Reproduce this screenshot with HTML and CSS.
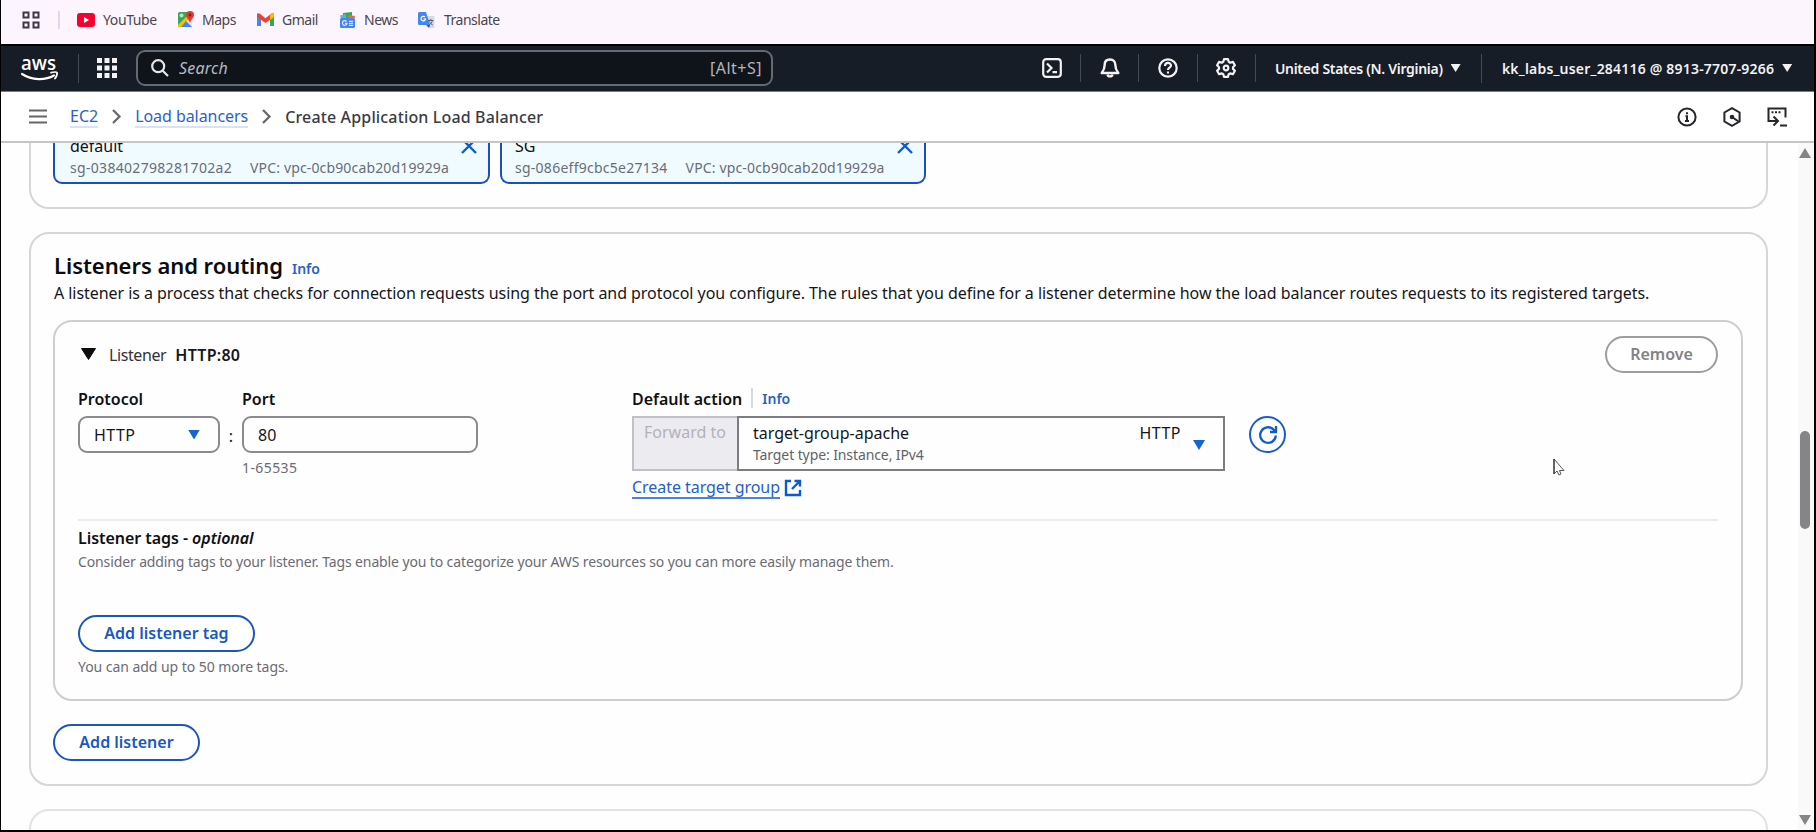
FILE: index.html
```html
<!DOCTYPE html>
<html lang="en">
<head>
<meta charset="utf-8">
<title>Create Application Load Balancer</title>
<link rel="stylesheet" href="styles.css">
</head>
<body>
<div class="frame">
  <nav class="bookmarks">
    <svg class="bm-apps" width="18" height="18" viewBox="0 0 18 18" fill="none" stroke="#3c3a42" stroke-width="2"><path d="M1.500 1.500h5v5h-5zM11.500 1.500h5v5h-5zM1.500 11.500h5v5h-5zM11.500 11.500h5v5h-5z"/></svg>
    <span class="bm-sep"></span>
    <span class="bm bm-youtube"><svg width="18" height="14" viewBox="0 0 18 14"><rect width="18" height="14" rx="3" fill="#f6022f"/><path d="M7 4v6l5-3z" fill="#fff"/></svg><span>YouTube</span></span>
    <span class="bm bm-maps"><svg width="18" height="17" viewBox="0 0 18 17"><rect x="1" y="1" width="14" height="15" rx="1.500" fill="#34a853"/><path d="M1 16 15 2v14z" fill="#dfe3ea"/><path d="M1 14 12 3l3 2L4 16H1z" fill="#fbbc04"/><path d="M4 16l5-6 6 6z" fill="#4285f4"/><circle cx="4.500" cy="4.500" r="2" fill="#b7e2c1"/><path d="M13 0a4 4 0 0 1 4 4c0 3-3 4-4 8-1-4-4-5-4-8a4 4 0 0 1 4-4z" fill="#e0392e"/><circle cx="13" cy="4" r="1.400" fill="#8c1d16"/></svg><span>Maps</span></span>
    <span class="bm bm-gmail"><svg width="17" height="13" viewBox="0 0 17 13"><path d="M0 2v11h4V5z" fill="#4285f4"/><path d="M17 2v11h-4V5z" fill="#34a853"/><path d="M0 1.500C0 0 2 0 3 .8l5.500 4.400L14 .8c1-.8 3-.8 3 .7V4L8.500 10 0 4z" fill="#ea4335"/><path d="M13 1.600 14 .8c1-.8 3-.8 3 .7V4l-4 3z" fill="#fbbc04"/></svg><span>Gmail</span></span>
    <span class="bm bm-news"><svg width="17" height="16" viewBox="0 0 17 16"><path d="M4 1l9-1v6H4z" fill="#34a853"/><path d="M1 3.500 7 2v5H2z" fill="#55b7d0"/><path d="M9 3l7 1-1 4H9z" fill="#ea6a35"/><rect x="1" y="6" width="15" height="10" rx="1.500" fill="#4285f4"/><path d="M7.500 9.500A2.300 2.300 0 1 0 8 11.300H6M10 9.300h4M10 11.300h4M10 13.300h4" fill="none" stroke="#dbe8fd" stroke-width="1.200"/></svg><span>News</span></span>
    <span class="bm bm-translate"><svg width="17" height="16" viewBox="0 0 17 16"><path d="M7 4h8.500a1 1 0 0 1 1 1v10a1 1 0 0 1-1 1H11z" fill="#d5dae3"/><path d="M1.500 0H8l4 13H1.500A1.500 1.500 0 0 1 0 11.500v-10A1.500 1.500 0 0 1 1.500 0z" fill="#4285f4"/><path d="M7 5A2.300 2.300 0 1 0 7.600 7H5.500" fill="none" stroke="#fff" stroke-width="1.200"/><path d="M10 8.500h5.500M12.800 7v1.500M11 13c2-1 3-2.500 3.300-4.500M11.500 9.500c.6 1.500 1.600 2.800 3.300 3.500" fill="none" stroke="#5b6270"/><path d="M8 13h4l-1 3z" fill="#2a56c6"/></svg><span>Translate</span></span>
  </nav>

  <header class="topnav">
    <svg class="aws" width="38" height="28" viewBox="0 -2 38 28"><text x="0" y="13.500" class="aws-word" textLength="35" lengthAdjust="spacingAndGlyphs">aws</text><path d="M1 18c10 6.500 23 6.500 32 1.500" fill="none" stroke="#fff" stroke-width="2.200" stroke-linecap="round"/><path d="M30 16.700c3-.8 5.500-.8 6 0s-.4 3.800-2 5.800" fill="none" stroke="#fff" stroke-width="1.800" stroke-linecap="round"/></svg>
    <span class="nav-sep sep-logo"></span>
    <svg class="grid" width="20" height="20" viewBox="0 0 20 20" fill="#f4f4f6"><path d="M0 0h5v5H0zM7.500 0h5v5h-5zM15 0h5v5h-5zM0 7.500h5v5H0zM7.500 7.500h5v5h-5zM15 7.500h5v5h-5zM0 15h5v5H0zM7.500 15h5v5h-5zM15 15h5v5h-5z"/></svg>
    <div class="search">
      <svg width="18" height="18" viewBox="0 0 18 18" fill="none" stroke="#e6e6ea" stroke-width="2.200"><circle cx="7.200" cy="7.200" r="6"/><path d="m11.500 11.500 5.500 5.500"/></svg>
      <span class="search-ph">Search</span><span class="search-key">[Alt+S]</span>
    </div>
    <div class="nav-icons">
      <span class="nav-ic"><svg width="20" height="20" viewBox="0 0 20 20" fill="none" stroke="#f2f2f5" stroke-width="2.200"><rect x="1.200" y="1.200" width="17.600" height="17.600" rx="3"/><path d="m5 5.500 4.500 4.500L5 14.500M10.500 14.200H15"/></svg></span>
      <span class="nav-ic"><svg width="20" height="20" viewBox="0 0 20 20" fill="none" stroke="#f2f2f5" stroke-width="2.400" stroke-linejoin="round"><path d="M10 1.500c-3.500 0-5.300 2.300-5.300 5.200 0 4-1 5.800-3 8.300h16.600c-2-2.500-3-4.300-3-8.300 0-2.900-1.800-5.200-5.300-5.200z"/><path d="M7.500 16.500c.5 2.500 4.500 2.500 5 0"/></svg></span>
      <span class="nav-ic"><svg width="20" height="20" viewBox="0 0 20 20" fill="none" stroke="#f2f2f5" stroke-width="2.200"><circle cx="10" cy="10" r="8.700"/><path d="M7 8c0-4 6-4 6-.5 0 2.300-3 2-3 4.500M10 13.500v2"/></svg></span>
      <span class="nav-ic"><svg width="20" height="20" viewBox="0 0 20 20" fill="none" stroke="#f2f2f5" stroke-width="2.200" stroke-linejoin="round"><path d="M8 1.200h4l.7 2.600 1.500.9 2.700-.8 2 3.400L17 9.200v1.700l1.900 1.900-2 3.400-2.700-.8-1.500.9-.7 2.600H8l-.7-2.600-1.500-.9-2.700.8-2-3.400L3 10.900V9.200L1.100 7.300l2-3.400 2.700.8 1.500-.9z"/><circle cx="10" cy="10" r="2.300"/></svg></span>
    </div>
    <div class="region"><span class="region-t">United States (N. Virginia)</span><i class="caret"></i></div>
    <span class="nav-sep sep-user"></span>
    <div class="user"><span class="user-t">kk_labs_user_284116 @ 8913-7707-9266</span><i class="caret"></i></div>
  </header>

  <div class="crumbs">
    <svg class="burger" width="18" height="15" viewBox="0 0 18 15" stroke="#66666b" stroke-width="2.200"><path d="M0 1.500h18M0 7.500h18M0 13.500h18"/></svg>
    <a class="cr cr-ec2">EC2</a>
    <svg class="chev" width="9" height="15" viewBox="0 0 9 15" fill="none" stroke="#66666b" stroke-width="2.200"><path d="m1 1 6.500 6.500L1 14"/></svg>
    <a class="cr cr-lb">Load balancers</a>
    <svg class="chev" width="9" height="15" viewBox="0 0 9 15" fill="none" stroke="#66666b" stroke-width="2.200"><path d="m1 1 6.500 6.500L1 14"/></svg>
    <span class="cr-cur">Create Application Load Balancer</span>
    <div class="tools">
      <svg width="20" height="20" viewBox="0 0 20 20" fill="none" stroke="#26262b" stroke-width="2"><circle cx="10" cy="10" r="8.600"/><path d="M8.500 9.200H10V14M8 14h4M10 5.300v2"/></svg>
      <svg width="20" height="20" viewBox="0 0 20 20" fill="none" stroke="#26262b" stroke-width="2"><path d="m10 1.200 7.600 4.300v9L10 18.800l-7.600-4.300v-9z"/><path d="M10 10l6.500 4.500"/><circle cx="10" cy="10" r="1.300" fill="#26262b"/></svg>
      <svg width="20" height="20" viewBox="0 0 20 20" fill="none" stroke="#26262b" stroke-width="2"><path d="M5.500 14H1.500V1.500h17v9M13 18.500h7M4 14h6.500M6.500 9.500l4.500 4.500-4.500 4.500M4.500 5.300h2M8 5.300h2M11.500 5.300h2"/></svg>
    </div>
  </div>

  <main class="body">
    <div class="content">
      <section class="card card-top">
        <div class="token token-a">
          <div class="tk-name">default</div>
          <svg class="tk-x" width="16" height="16" viewBox="0 0 16 16" stroke="#0f5bd0" stroke-width="2.400"><path d="m1 1 14 14M15 1 1 15"/></svg>
          <div class="tk-meta"><span class="tk-id">sg-038402798281702a2</span><span class="tk-vpc">VPC: vpc-0cb90cab20d19929a</span></div>
        </div>
        <div class="token token-b">
          <div class="tk-name">SG</div>
          <svg class="tk-x" width="16" height="16" viewBox="0 0 16 16" stroke="#0f5bd0" stroke-width="2.400"><path d="m1 1 14 14M15 1 1 15"/></svg>
          <div class="tk-meta"><span class="tk-id tk-id-b">sg-086eff9cbc5e27134</span><span class="tk-vpc">VPC: vpc-0cb90cab20d19929a</span></div>
        </div>
      </section>

      <section class="card card-main">
        <div class="title-row"><h2>Listeners and routing</h2><a class="info">Info</a></div>
        <p class="intro">A listener is a process that checks for connection requests using the port and protocol you configure. The rules that you define for a listener determine how the load balancer routes requests to its registered targets.</p>
        <div class="listener">
          <div class="l-head">
            <svg width="15" height="12" viewBox="0 0 15 12"><path d="M.5.500h14l-7 11z" fill="#0c0c0e" stroke="#0c0c0e" stroke-linejoin="round"/></svg>
            <span class="l-word">Listener</span><b class="l-port">HTTP:80</b>
            <button class="btn btn-remove"><span>Remove</span></button>
          </div>
          <div class="fields">
            <div class="f-protocol"><label class="lbl lbl-protocol">Protocol</label><div class="box select"><span class="http">HTTP</span><i class="tri"></i></div></div>
            <span class="colon">:</span>
            <div class="f-port"><label class="lbl lbl-port">Port</label><div class="box"><span>80</span></div><div class="hint hint-port">1-65535</div></div>
            <div class="f-action">
              <div class="a-label"><label class="lbl lbl-action">Default action</label><a class="info">Info</a></div>
              <div class="a-row">
                <div class="fwd"><span>Forward to</span></div>
                <div class="target">
                  <div class="t-text"><div class="t-name">target-group-apache</div><div class="t-type">Target type: Instance, IPv4</div></div>
                  <span class="http t-http">HTTP</span><i class="tri"></i>
                </div>
              </div>
              <a class="create"><span>Create target group</span><svg width="18" height="18" viewBox="0 0 18 18" fill="none" stroke="#0b5bd3" stroke-width="2.400"><path d="M7 2H2v14h14v-5M10.500 2H16v5.500M16 2 8 10"/></svg></a>
            </div>
            <div class="refresh"><svg width="20" height="20" viewBox="0 0 20 20" fill="none" stroke="#0f5bc8" stroke-width="2.300"><path d="M17.800 10.500A7.800 7.800 0 1 1 15.500 4.500L17.500 6.500M18 1v6h-6"/></svg></div>
          </div>
          <div class="tags">
            <div class="tags-title">Listener tags - <em>optional</em></div>
            <div class="tags-desc">Consider adding tags to your listener. Tags enable you to categorize your AWS resources so you can more easily manage them.</div>
            <button class="btn btn-tag"><span>Add listener tag</span></button>
            <div class="tags-more">You can add up to 50 more tags.</div>
          </div>
        </div>
        <button class="btn btn-add"><span>Add listener</span></button>
      </section>
      <section class="card card-next"></section>
    </div>
    <div class="scroll"><i class="s-up"></i><i class="s-thumb"></i><i class="s-down"></i></div>
  </main>
  <svg class="cursor" width="13" height="18" viewBox="0 0 13 18"><path d="M1 1v15l3-3 2 4 2-1-1.500-3.500H11z" fill="#fff" stroke="#55555c"/><path d="M1 1v15" stroke="#222"/></svg>
</div>
</body>
</html>
```
FILE: styles.css
```css
* { box-sizing: border-box; }
body { margin: 0; background: #000; font-family: "Noto Sans", "Open Sans", sans-serif; font-size: 16px; color: #16161a; }
i { display: block; flex: none; }
svg { display: block; flex: none; overflow: visible; }
span, a, b, label, div, h2, p { white-space: nowrap; }
.frame { position: relative; width: 1816px; height: 832px; padding: 0 2px 2px 1px; display: flex; flex-direction: column; overflow: hidden; background: #000; }

.bookmarks { height: 44px; flex: none; background: #fdf5fe; display: flex; align-items: center; padding: 0 0 5px 21px; font-size: 14px; letter-spacing: -0.5px; color: #48454e; }
.bm-sep { width: 2px; height: 18px; background: #e6d3f0; margin: 0 17px 0 18px; }
.bm { display: flex; align-items: center; gap: 8px; }
.bm-youtube { width: 100px; letter-spacing: -0.4px; }
.bm-maps { width: 80px; gap: 7px; }
.bm-gmail { width: 82px; gap: 8px; }
.bm-news { width: 79px; gap: 8px; }
.bm-translate { gap: 9px; }

.topnav { height: 48px; flex: none; background: #161d26; border-top: 2px solid #000; border-bottom: 1px solid #777b85; display: flex; align-items: center; padding: 0 0 1px 20px; color: #f2f2f5; }
.aws-word { font: 600 19px "Open Sans", sans-serif; fill: #fff; }
.nav-sep { width: 1px; height: 29px; background: #424a57; flex: none; }
.sep-logo { margin: 0 18px 0 19px; }
.search { width: 637px; height: 36px; margin-left: 19px; border: 2px solid #646a75; border-radius: 9px; background: #0f141a; display: flex; align-items: center; padding: 0 9px 0 13px; }
.search-ph { font-style: italic; color: #b9bac2; margin-left: 10px; letter-spacing: 0.2px; }
.search-key { margin-left: auto; color: #b4b5bd; letter-spacing: 0.5px; }
.nav-icons { margin-left: 250px; display: flex; flex: none; }
.nav-ic { width: 58px; height: 28px; border-right: 1px solid #424a57; display: flex; align-items: center; justify-content: center; }
.nav-ic:nth-child(n+2) { width: 58.300px; }
.region { display: flex; align-items: center; margin-left: 19px; width: 206px; font-size: 14px; font-weight: 600; letter-spacing: -0.3px; }
.user { display: flex; align-items: center; margin-left: 20px; font-size: 14px; font-weight: 600; letter-spacing: 0.2px; }
.caret { width: 10px; height: 8px; background: #f2f2f5; clip-path: polygon(0 0, 100% 0, 50% 100%); margin-left: 8px; }

.crumbs { height: 51px; flex: none; background: #fff; border-bottom: 2px solid #c6c6ca; display: flex; align-items: center; padding-left: 28px; }
.cr { color: #2a62c8; border-bottom: 2px solid #dbe2f8; line-height: 20px; }
.cr-ec2 { margin-left: 23px; }
.cr-lb { letter-spacing: -0.06px; }
.chev { margin: 0 14px; }
.cr-cur { color: #3b3b42; font-weight: 500; letter-spacing: 0.15px; }
.tools { margin-left: auto; display: flex; gap: 25px; padding-right: 27px; }

.body { flex: 1; min-height: 0; display: flex; background: #fefefe; overflow: hidden; }
.content { flex: 1; padding: 0 30px 0 28px; min-width: 0; }
.card { border: 2px solid #d6d6da; border-radius: 20px; background: #fefefe; }
.card-top { height: 66px; border-top: 0; border-radius: 0 0 20px 20px; display: flex; gap: 10px; padding-left: 22px; overflow: hidden; }
.token { height: 41px; border: 2px solid #1c50c0; border-top: 0; border-radius: 0 0 9px 9px; background: #f0fbff; display: grid; grid-template-columns: 1fr auto; align-content: start; padding: 0 11px 0 15px; }
.token-a { width: 437px; }
.token-b { width: 426px; padding-left: 13px; }
.tk-name { line-height: 22px; margin-top: -8px; height: 22px; color: #111; }
.tk-x { margin-top: -5px; height: 16px; }
.tk-meta { grid-column: 1 / 3; margin-top: 1px; display: flex; gap: 18px; font-size: 14px; line-height: 20px; color: #686d78; }
.tk-id { letter-spacing: 0.31px; }
.tk-id-b { letter-spacing: 0.26px; }
.tk-vpc { letter-spacing: 0.15px; }

.card-main { height: 554px; margin-top: 23px; padding: 16px 23px 0 22px; }
.title-row { display: flex; align-items: baseline; gap: 9px; height: 30px; line-height: 30px; }
h2 { margin: 0; padding-left: 1px; font-size: 22px; font-weight: 600; letter-spacing: -0.05px; color: #0c0c0f; line-height: 30px; }
.info { color: #2a5fc9; font-size: 14px; font-weight: 600; }
.intro { margin: 2px 0 0; padding-left: 1px; line-height: 22px; letter-spacing: -0.052px; }
.listener { height: 381px; margin-top: 16px; border: 2px solid #cdcdd2; border-radius: 19px; padding: 13px 23px 0; }
.l-head { display: flex; align-items: center; height: 38px; padding-left: 3px; }
.l-word { margin-left: 13px; padding-top: 2px; letter-spacing: -0.4px; color: #33333a; }
.l-port { margin-left: 9px; padding-top: 2px; font-weight: 600; letter-spacing: 0.25px; }
.btn { display: flex; align-items: center; justify-content: center; height: 37px; border: 2px solid #1c56c0; border-radius: 19px; background: #fff; color: #1857c4; font: 600 16px "Noto Sans", sans-serif; padding: 0 0 1px; }
.btn-remove { margin-left: auto; width: 113px; border-color: #9c9ca2; color: #828288; }
.fields { display: flex; height: 148px; padding-top: 15px; border-bottom: 2px solid #ececee; }
.lbl { display: block; font-weight: 600; line-height: 22px; height: 28px; color: #101014; }
.box { height: 37px; border: 2px solid #8a8a90; border-radius: 9px; display: flex; align-items: center; padding: 0 18px 0 14px; }
.f-protocol { width: 142px; }
.select { justify-content: space-between; }
.http { letter-spacing: 0.45px; }
.tri { width: 12px; height: 10px; background: #1762d8; clip-path: polygon(0 0, 100% 0, 50% 100%); }
.colon { width: 22px; text-align: center; padding-top: 37px; }
.f-port { width: 236px; }
.hint { font-size: 14px; letter-spacing: 0.4px; line-height: 20px; margin-top: 5px; color: #6b6b74; }
.f-action { margin-left: 154px; width: 593px; }
.a-label { display: flex; line-height: 22px; }
.a-label .info { border-left: 2px solid #d8d8dc; padding-left: 9px; height: 20px; margin-left: 9px; }
.a-row { display: flex; height: 55px; }
.fwd { width: 105px; border: 2px solid #c0c0c6; border-right: 0; background: #ebebf0; color: #b2b2b9; padding: 3px 0 0 10px; }
.target { flex: 1; border: 2px solid #7c7c82; display: flex; padding: 4px 18px 0 14px; color: #16161a; }
.t-text { flex: 1; }
.t-name { line-height: 22px; }
.t-type { font-size: 14px; letter-spacing: -0.1px; line-height: 22px; color: #62626a; }
.t-http { line-height: 22px; }
.target .tri { margin: 18px 0 0 12px; }
.create { display: flex; gap: 4px; align-items: center; margin-top: 6px; color: #245fca; line-height: 20px; }
.create span { border-bottom: 2px solid #4f7fd8; letter-spacing: -0.05px; }
.refresh { width: 37px; height: 37px; border: 2px solid #1c5cc8; border-radius: 50%; margin: 28px 0 0 24px; display: flex; align-items: center; justify-content: center; }
.tags-title { margin-top: 6px; font-weight: 600; letter-spacing: -0.05px; line-height: 22px; color: #101014; }
.tags-desc, .tags-more { font-size: 14px; letter-spacing: -0.12px; line-height: 20px; color: #6b6b74; }
.tags-desc { margin-top: 3px; }
.btn-tag { width: 177px; margin-top: 43px; }
.tags-more { margin-top: 5px; letter-spacing: -0.05px; }
.btn-add { width: 147px; margin-top: 23px; }
.card-next { height: 60px; margin-top: 23px; border-color: #e2e2e6; }

.scroll { width: 16px; background: #f9f9fa; display: flex; flex-direction: column; align-items: center; padding: 5px 2px 5px 0; }
.s-up { width: 12px; height: 10px; background: #858588; clip-path: polygon(50% 0, 100% 100%, 0 100%); }
.s-thumb { width: 10px; height: 98px; margin-top: 273px; border-radius: 5px; background: #858588; }
.s-down { width: 12px; height: 10px; margin-top: auto; background: #858588; clip-path: polygon(0 0, 100% 0, 50% 100%); }
.cursor { position: absolute; left: 1553px; top: 458px; }
```
